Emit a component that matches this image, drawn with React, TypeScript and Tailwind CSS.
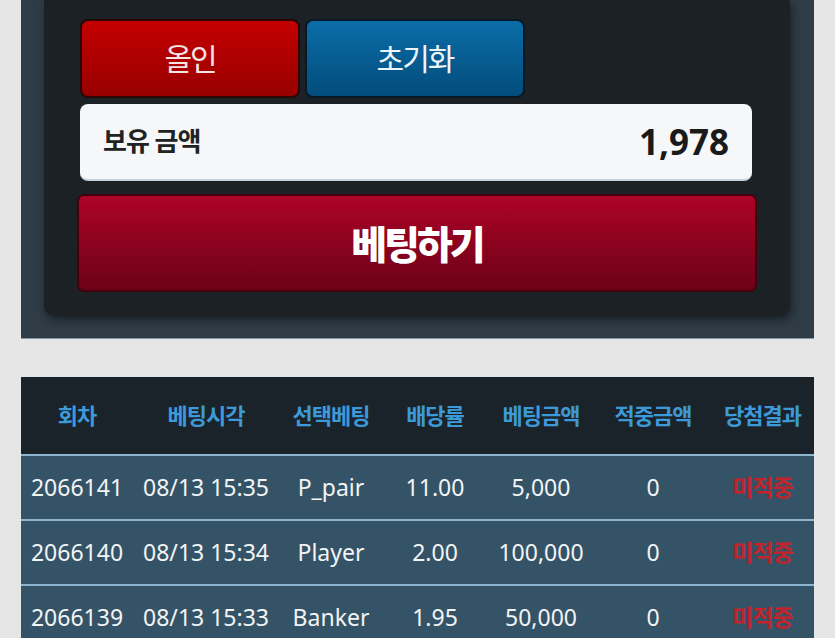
import React from "react";

const rows = [
  ["2066141", "08/13 15:35", "P_pair", "11.00", "5,000", "0", "미적중"],
  ["2066140", "08/13 15:34", "Player", "2.00", "100,000", "0", "미적중"],
  ["2066139", "08/13 15:33", "Banker", "1.95", "50,000", "0", "미적중"],
];

const headers = ["회차", "베팅시각", "선택베팅", "배당률", "베팅금액", "적중금액", "당첨결과"];

const grid = "grid grid-cols-[112px_146px_104px_104px_108px_116px_103px]";

export default function App() {
  return (
    <div
      className="w-[835px] h-[638px] overflow-hidden bg-[#e6e6e6] px-[21px]"
      style={{ fontFamily: '"Noto Sans", "Noto Sans CJK KR", sans-serif' }}
    >
      {/* Betting panel */}
      <div className="h-[339px] bg-[#2f3c45] border-b border-[#8798a4] px-[23px] pr-[24px]">
        <div className="h-[316px] bg-[#1b2125] rounded-b-[10px] shadow-[2px_4px_8px_rgba(0,0,0,0.45)] px-[33px] pt-[19px]">
          <div className="flex gap-[5px] ml-[3px]">
            <button className="w-[220px] h-[79px] rounded-[8px] border-2 border-[#2a0606] bg-gradient-to-b from-[#c40000] to-[#980000] text-[#f7e4e4] text-[30px] tracking-[-2px] flex items-center justify-center leading-none">
              올인
            </button>
            <button className="w-[220px] h-[79px] rounded-[8px] border-2 border-[#071826] bg-gradient-to-b from-[#0b6da8] to-[#034d7c] text-[#eef4f8] text-[30px] tracking-[-2px] flex items-center justify-center leading-none">
              초기화
            </button>
          </div>
          <div className="mt-[6px] ml-[3px] mr-[5px] h-[77px] rounded-[8px] bg-[#f6f7f8] border-b-2 border-[#c4d0da] flex items-center justify-between px-[23px]">
            <span className="text-[26px] font-bold text-[#222] tracking-[-1px]">보유 금액</span>
            <span className="text-[35px] font-bold text-[#1a1a1a] leading-none">1,978</span>
          </div>
          <button className="mt-[13px] w-full h-[98px] rounded-[7px] border-2 border-[#45000e] bg-gradient-to-b from-[#ad0328] to-[#6c0217] text-white text-[39px] font-extrabold tracking-[-3px] flex items-center justify-center leading-none">
            베팅하기
          </button>
        </div>
      </div>

      {/* History table */}
      <div className="mt-[38px] w-[793px]">
        <div className={`${grid} h-[77px] bg-[#1b232a] items-center`}>
          {headers.map((h) => (
            <div key={h} className="text-center text-[22px] font-bold text-[#3d9ad9] tracking-[-1px] whitespace-nowrap">
              {h}
            </div>
          ))}
        </div>
        {rows.map((r) => (
          <div
            key={r[0]}
            className={`${grid} h-[65px] bg-[#355366] border-t-2 border-[#8db5d0] items-center`}
          >
            {r.map((c, i) => (
              <div
                key={i}
                className={
                  i === 6
                    ? "text-center text-[23px] font-bold text-[#c1242c] tracking-[-1px]"
                    : "text-center text-[23px] text-[#f2f4f5] whitespace-nowrap"
                }
              >
                {c}
              </div>
            ))}
          </div>
        ))}
      </div>
    </div>
  );
}
